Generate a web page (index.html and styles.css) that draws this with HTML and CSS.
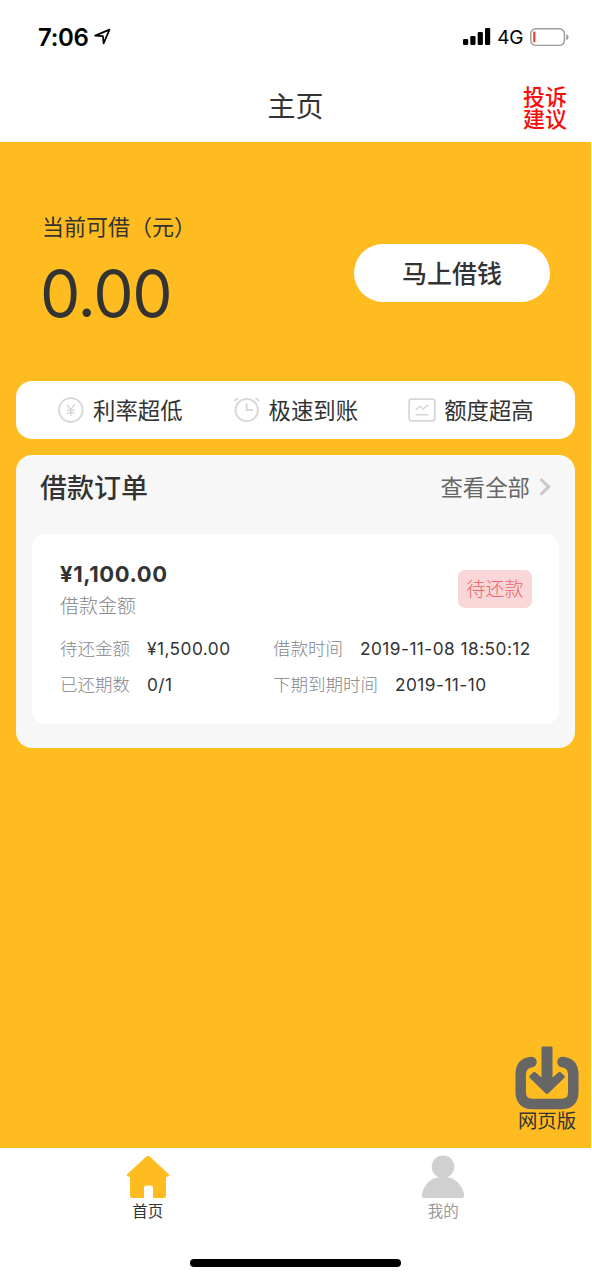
FILE: index.html
```html
<!DOCTYPE html>
<html lang="zh-CN">
<head>
    <meta charset="UTF-8">
    <meta name="viewport" content="width=device-width, initial-scale=1.0">
    <title>主页</title>
    <link rel="stylesheet" href="styles.css">
</head>
<body>
<div class="app">
    <!-- 状态栏 -->
    <div class="status-bar">
        <div class="status-left">
            <span class="time">7:06</span>
            <svg class="location" width="18" height="18" viewBox="0 0 18 18"><path d="M1.2 7.6L15.5 1.6L9.6 15.4L8.9 8.2Z" fill="none" stroke="#000" stroke-width="1.7" stroke-linejoin="round"/></svg>
        </div>
        <div class="status-right">
            <svg class="signal" width="28" height="18" viewBox="0 0 28 18">
                <rect x="0" y="11" width="5.2" height="6" rx="1.3"/>
                <rect x="7.3" y="8" width="5.2" height="9" rx="1.3"/>
                <rect x="14.7" y="4" width="5.2" height="13" rx="1.3"/>
                <rect x="22" y="0" width="5.2" height="17" rx="1.3"/>
            </svg>
            <span class="network">4G</span>
            <svg class="battery" width="39" height="19" viewBox="0 0 39 19">
                <rect x="0.8" y="0.8" width="33.6" height="16.6" rx="5" fill="none" stroke="#9b9b9b" stroke-width="1.4"/>
                <rect x="3.2" y="3.4" width="2.2" height="11" rx="1" fill="#e5423b"/>
                <path d="M36.2 6.2Q38.6 7.2 38.6 9.2Q38.6 11.2 36.2 12.2Z" fill="#9b9b9b"/>
            </svg>
        </div>
    </div>

    <!-- 标题栏 -->
    <header class="navbar">
        <h1>主页</h1>
        <a class="feedback" href="#">投诉<br>建议</a>
    </header>

    <main class="content">
        <!-- 可借额度 -->
        <section class="quota">
            <div class="quota-info">
                <div class="quota-label">当前可借（元）</div>
                <div class="quota-amount">0.00</div>
            </div>
            <button class="btn-borrow">马上借钱</button>
        </section>

        <section class="features">
            <div class="feature">
                <svg width="28" height="28" viewBox="0 0 28 28"><circle cx="13.8" cy="14" r="11.8"/><path d="M9.8 8.5L13.8 13.7L17.8 8.5M13.8 13.7V20M10.1 14.2H17.5M10.1 17H17.5" stroke-width="1.4"/></svg>
                <span>利率超低</span>
            </div>
            <div class="feature">
                <svg width="28" height="28" viewBox="0 0 28 28"><circle cx="13.7" cy="14" r="11.2"/><path d="M13.7 7.5V14H20M1.5 5.3Q2.7 3.2 5 2M22.4 2Q24.7 3.2 25.9 5.3"/></svg>
                <span>极速到账</span>
            </div>
            <div class="feature">
                <svg width="28" height="28" viewBox="0 0 28 28"><rect x="1.2" y="3.2" width="25.6" height="21.6" rx="2.5"/><path d="M7.5 14.3L12.2 10.2L15 13L20.5 8.8M7.5 18.7H20.5" stroke-width="1.5"/></svg>
                <span>额度超高</span>
            </div>
        </section>

        <!-- 借款订单 -->
        <section class="orders">
            <div class="orders-head">
                <h2>借款订单</h2>
                <a class="more" href="#"><span>查看全部</span>
                    <svg width="12" height="20" viewBox="0 0 12 20"><path d="M1.5 2L9.6 9.8L1.5 17.6" fill="none" stroke="#c8c8cd" stroke-width="3"/></svg>
                </a>
            </div>
            <div class="order-card">
                <div class="order-top">
                    <div>
                        <div class="order-amount">¥1,100.00</div>
                        <div class="order-caption">借款金额</div>
                    </div>
                    <span class="tag">待还款</span>
                </div>
                <div class="order-details">
                    <div class="detail"><label>待还金额</label><span>¥1,500.00</span></div>
                    <div class="detail"><label>借款时间</label><span>2019-11-08 18:50:12</span></div>
                    <div class="detail"><label>已还期数</label><span>0/1</span></div>
                    <div class="detail"><label>下期到期时间</label><span>2019-11-10</span></div>
                </div>
            </div>
        </section>

        <!-- 悬浮下载入口 -->
        <a class="download" href="#">
            <svg width="64" height="64" viewBox="0 0 64 64">
                <path d="M16.5 16Q5.7 17.5 5.7 28V46Q5.7 58 17.7 58H46.3Q58.3 58 58.3 46V28Q58.3 17.5 47.5 16" fill="none" stroke="#666" stroke-width="10.5" stroke-linecap="round"/>
                <path d="M27.5 0.5H36.5Q37.5 0.5 37.5 1.5V31.5L43.6 26.2Q44.6 25.4 45.6 26.2L49.4 29.8Q50.2 30.8 49.4 31.8L33.5 47.3Q32 48.6 30.5 47.3L14.6 31.8Q13.8 30.8 14.6 29.8L18.4 26.2Q19.4 25.4 20.4 26.2L26.5 31.5V1.5Q26.5 0.5 27.5 0.5Z" fill="#666"/>
            </svg>
            <span>网页版</span>
        </a>
    </main>

    <!-- 底部导航 -->
    <nav class="tabbar">
        <a class="tab active" href="#">
            <svg width="44" height="44" viewBox="0 0 44 44"><path d="M20 1.8Q22 0.2 24 1.8L42.6 19Q44.2 21.5 41.4 21.8H40V40.5Q40 43 37.5 43H27V33Q27 30.4 24.4 30.4H20.6Q18 30.4 18 33V43H6.5Q4 43 4 40.5V21.8H2.6Q-0.2 21.5 1.4 19Z"/></svg>
            <span>首页</span>
        </a>
        <a class="tab" href="#">
            <svg width="44" height="44" viewBox="0 0 44 44"><circle cx="22" cy="11.8" r="11.3"/><path d="M22 21.8C34 21.8 42 30.5 43.2 40.5Q43.3 43 41 43H3Q0.7 43 0.8 40.5C2 30.5 10 21.8 22 21.8Z"/></svg>
            <span>我的</span>
        </a>
    </nav>
    <div class="home-indicator"></div>
</div>
</body>
</html>
```

FILE: styles.css
```css
* {
    box-sizing: border-box;
}

body {
    margin: 0;
    background-color: #fff;
    color: #333;
    font-family: Inter, "Noto Sans CJK SC", sans-serif;
}

a {
    color: inherit;
    text-decoration: none;
}

h1, h2 {
    margin: 0;
}

.app {
    display: flex;
    flex-direction: column;
    width: 591px;
    height: 1280px;
    overflow: hidden;
}

/* 状态栏 */
.status-bar {
    display: flex;
    justify-content: space-between;
    height: 72px;
    padding: 24px 22px 0 38px;
    color: #000;
}

.status-left, .status-right {
    display: flex;
    height: 26px;
    align-items: center;
}

.time {
    font-size: 24px;
    font-weight: 600;
    letter-spacing: -0.3px;
}

.location {
    margin-left: 5px;
}

.network {
    margin: 1px 7px 0 6px;
    font-size: 19px;
    letter-spacing: -0.4px;
}

/* 标题栏 */
.navbar {
    display: grid;
    grid-template-columns: 1fr auto 1fr;
    align-items: center;
    height: 70px;
    padding: 0 24px;
}

.navbar h1 {
    grid-column: 2;
    font-size: 28px;
    font-weight: 400;
    line-height: 68px;
}

.feedback {
    justify-self: end;
    padding-top: 2px;
    color: #f80d0d;
    font-size: 22px;
    font-weight: 500;
    line-height: 22px;
}

.content {
    position: relative;
    height: 1006px;
    padding: 0 16px;
    background-color: #ffbc20;
}

/* 可借额度 */
.quota {
    display: flex;
    justify-content: space-between;
    height: 239px;
    padding: 69px 25px 0 26px;
}

.quota-label {
    font-size: 22px;
    line-height: 32px;
    white-space: nowrap;
}

.quota-amount {
    font-size: 64px;
    font-weight: 400;
    line-height: 80px;
    margin: 11px 0 0 -2px;
    letter-spacing: -1.2px;
}

.btn-borrow {
    width: 196px;
    height: 58px;
    margin-top: 33px;
    padding: 0 0 2px;
    border: none;
    border-radius: 29px;
    background-color: #fff;
    color: #333;
    font-family: inherit;
    font-size: 25px;
    font-weight: 500;
}

.features {
    display: flex;
    gap: 50px;
    height: 58px;
    padding-left: 41px;
    border-radius: 16px;
    background-color: #fff;
}

.feature {
    display: flex;
    align-items: center;
    gap: 8px;
    font-size: 22.4px;
}

.feature span, .more span {
    padding-bottom: 2px;
}

.feature svg {
    fill: none;
    stroke: #d6d6d6;
    stroke-width: 1.8;
}

/* 借款订单 */
.orders {
    height: 293px;
    margin-top: 16px;
    padding: 0 16px;
    border-radius: 16px;
    background-color: #f7f7f7;
}

.orders-head {
    display: flex;
    justify-content: space-between;
    align-items: center;
    height: 79px;
    padding: 0 8px 15px;
}

.orders-head h2 {
    padding-bottom: 2px;
    font-size: 27px;
    font-weight: 500;
}

.more {
    display: flex;
    align-items: center;
    gap: 9px;
    color: #666;
    font-size: 22.4px;
}

.order-card {
    height: 190px;
    padding: 24px 27px 24px 28px;
    border-radius: 14px;
    background-color: #fff;
}

.order-top {
    display: flex;
    justify-content: space-between;
    height: 72px;
}

.order-amount {
    font-size: 22px;
    font-weight: 700;
    letter-spacing: 0.6px;
    line-height: 32px;
}

.order-caption {
    margin-top: 2px;
    color: #85858a;
    font-size: 19px;
    font-weight: 300;
    line-height: 30px;
}

.tag {
    width: 74px;
    height: 38px;
    margin-top: 12px;
    border-radius: 7px;
    background-color: #f9d7d9;
    color: #f3626b;
    font-size: 19px;
    font-weight: 300;
    line-height: 40px;
    text-align: center;
}

.order-details {
    display: grid;
    grid-template-columns: 213px 1fr;
    grid-auto-rows: 36px;
}

.detail {
    display: flex;
    gap: 17px;
    font-size: 17.3px;
    letter-spacing: 0.45px;
    line-height: 38px;
    white-space: nowrap;
}

.detail label {
    color: #85858a;
    font-size: 17.5px;
    font-weight: 300;
    letter-spacing: 0;
}

/* 悬浮下载入口 */
.download {
    position: absolute;
    right: 12px;
    bottom: 15px;
    display: flex;
    flex-direction: column;
    align-items: center;
    font-size: 19.4px;
    line-height: 23px;
}

/* 底部导航 */
.tabbar {
    display: flex;
    height: 111px;
    padding-top: 7px;
}

.tab {
    flex: 1;
    display: flex;
    flex-direction: column;
    align-items: center;
    color: #999;
    font-size: 15.5px;
    line-height: 26px;
}

.tab svg {
    fill: #d0d0d0;
}

.tab.active {
    color: #333;
}

.tab.active svg {
    fill: #ffbc20;
}

.home-indicator {
    width: 211px;
    height: 8px;
    margin: 0 auto;
    border-radius: 4px;
    background-color: #000;
}
```
